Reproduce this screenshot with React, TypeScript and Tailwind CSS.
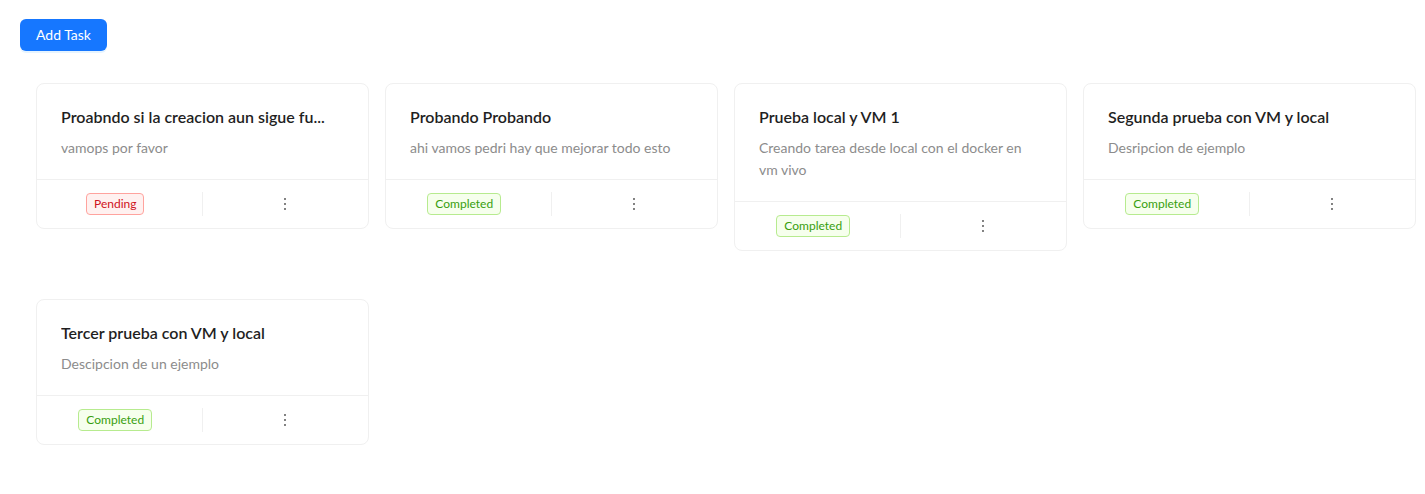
import React from 'react';

type Task = {
  id: number;
  title: string;
  description: string;
  status: 'Pending' | 'Completed';
};

const tasks: Task[] = [
  { id: 1, title: 'Proabndo si la creacion aun sigue fu...', description: 'vamops por favor', status: 'Pending' },
  { id: 2, title: 'Probando Probando', description: 'ahi vamos pedri hay que mejorar todo esto', status: 'Completed' },
  { id: 3, title: 'Prueba local y VM 1', description: 'Creando tarea desde local con el docker en vm vivo', status: 'Completed' },
  { id: 4, title: 'Segunda prueba con VM y local', description: 'Desripcion de ejemplo', status: 'Completed' },
  { id: 5, title: 'Tercer prueba con VM y local', description: 'Descipcion de un ejemplo', status: 'Completed' },
];

const MoreIcon = () => (
  <svg viewBox="64 64 896 896" width={16} height={16} fill="currentColor" aria-hidden="true">
    <path d="M456 231a56 56 0 10112 0 56 56 0 10-112 0zm0 280a56 56 0 10112 0 56 56 0 10-112 0zm0 280a56 56 0 10112 0 56 56 0 10-112 0z" />
  </svg>
);

const StatusTag = ({ status }: { status: Task['status'] }) =>
  status === 'Pending' ? (
    <span className="inline-block mr-2 px-[7px] h-[22px] leading-5 text-xs rounded border border-[#ffa39e] bg-[#fff1f0] text-[#cf1322]">
      Pending
    </span>
  ) : (
    <span className="inline-block mr-2 px-[7px] h-[22px] leading-5 text-xs rounded border border-[#b7eb8f] bg-[#f6ffed] text-[#389e0d]">
      Completed
    </span>
  );

const TaskCard = ({ task }: { task: Task }) => (
  <div className="bg-white border border-[#f0f0f0] rounded-lg overflow-hidden">
    <div className="px-6 pt-[21px] pb-5">
      <div className="text-base leading-6 font-semibold text-[#1f1f1f] truncate mb-2">{task.title}</div>
      <div className="text-sm leading-[22px] text-[#8c8c8c]">{task.description}</div>
    </div>
    <ul className="flex border-t border-[#f0f0f0]">
      <li className="w-1/2 my-3 h-6 flex items-center justify-center border-r border-[#f0f0f0]">
        <StatusTag status={task.status} />
      </li>
      <li className="w-1/2 my-3 h-6 flex items-center justify-center text-[#595959]">
        <MoreIcon />
      </li>
    </ul>
  </div>
);

export default function App() {
  return (
    <div className="min-h-screen bg-white pl-5 pt-[19px]" style={{ fontFamily: '"Segoe UI", Lato, sans-serif' }}>
      <button className="h-8 px-4 rounded-md bg-[#1677ff] text-white text-sm shadow-[0_2px_0_rgba(5,145,255,0.1)]">
        Add Task
      </button>
      <div className="ml-4 mt-8 w-[1380px] grid grid-cols-4 gap-x-4 gap-y-12 items-start">
        {tasks.map((t) => (
          <TaskCard key={t.id} task={t} />
        ))}
      </div>
    </div>
  );
}
